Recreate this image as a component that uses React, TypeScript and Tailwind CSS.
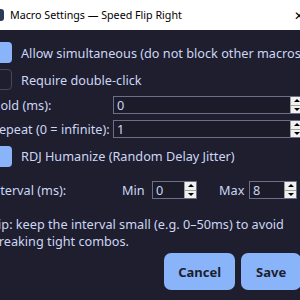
import React from "react";

function Check({ on }: { on?: boolean }) {
  return on ? (
    <div className="w-[21px] h-[21px] rounded-[4px] bg-[#89b4fa] shrink-0" />
  ) : (
    <div className="w-[21px] h-[21px] rounded-[4px] border border-[#45475a] bg-[#1e1e2e] shrink-0" />
  );
}

function Spin({ value, className }: { value: string; className: string }) {
  return (
    <div className={"flex h-[18px] border border-[#6c7086] bg-[#1b1b29] " + className}>
      <div className="flex-1 pl-[3px] leading-[16px] text-[#cdd6f4]">{value}</div>
      <div className="w-[12px] flex flex-col bg-[#f0f0f0] border-l border-[#a0a0a0]">
        <div className="flex-1 flex items-center justify-center">
          <div className="w-0 h-0 border-l-[3px] border-r-[3px] border-b-[3px] border-l-transparent border-r-transparent border-b-black" />
        </div>
        <div className="h-px bg-[#a0a0a0]" />
        <div className="flex-1 flex items-center justify-center">
          <div className="w-0 h-0 border-l-[3px] border-r-[3px] border-t-[3px] border-l-transparent border-r-transparent border-t-black" />
        </div>
      </div>
    </div>
  );
}

export default function App() {
  return (
    <div className="w-[300px] h-[300px] overflow-hidden relative bg-[#1e1e2e] text-[#cdd6f4] font-['Noto_Sans',sans-serif]">
      <header className="h-[30px] bg-white flex items-center relative">
        <div className="absolute left-[-6px] top-[9px] w-[10px] h-[12px] rounded-[3px] bg-[#2d3a55]" />
        <span className="ml-[10px] text-[10.7px] text-black">Macro Settings — Speed Flip Right</span>
        <span className="absolute right-[-4px] top-[7px] text-[12px] text-black">✕</span>
      </header>

      <div className="ml-[-9px] w-[310px] pt-[12px] flex flex-col text-[12.7px] leading-[18px]">
        <div className="flex items-center gap-[9px] h-[21px]">
          <Check on />
          <span className="whitespace-nowrap">Allow simultaneous (do not block other macros)</span>
        </div>
        <div className="flex items-center gap-[9px] h-[21px] mt-[6px]">
          <Check />
          <span>Require double-click</span>
        </div>

        <div className="grid grid-cols-[122px_1fr] items-center h-[18px] mt-[6px]">
          <span>Hold (ms):</span>
          <Spin value="0" className="w-[190px]" />
        </div>
        <div className="grid grid-cols-[122px_1fr] items-center h-[18px] mt-[6px]">
          <span>Repeat (0 = infinite):</span>
          <Spin value="1" className="w-[190px]" />
        </div>

        <div className="flex items-center gap-[9px] h-[22px] mt-[7px]">
          <Check on />
          <span>RDJ Humanize (Random Delay Jitter)</span>
        </div>

        <div className="flex items-center h-[18px] mt-[14px]">
          <span className="w-[131px] -ml-[3px] pr-[3px] box-content">Interval (ms):</span>
          <span className="w-[30px]">Min</span>
          <Spin value="0" className="w-[45px]" />
          <span className="ml-[22px] w-[30px]">Max</span>
          <Spin value="8" className="w-[48px]" />
        </div>

        <p className="mt-[17px] leading-[17px] whitespace-nowrap">
          Tip: keep the interval small (e.g. 0–50ms) to avoid
          <br />
          breaking tight combos.
        </p>

        <div className="flex gap-[6px] mt-[3px] ml-[173px]">
          <button className="w-[74px] h-[37px] rounded-[7px] bg-[#89b4fa] text-[#1e1e2e] font-bold text-[13px]">Cancel</button>
          <button className="w-[62px] h-[37px] rounded-[7px] bg-[#89b4fa] text-[#1e1e2e] font-bold text-[13px]">Save</button>
        </div>
      </div>
    </div>
  );
}
